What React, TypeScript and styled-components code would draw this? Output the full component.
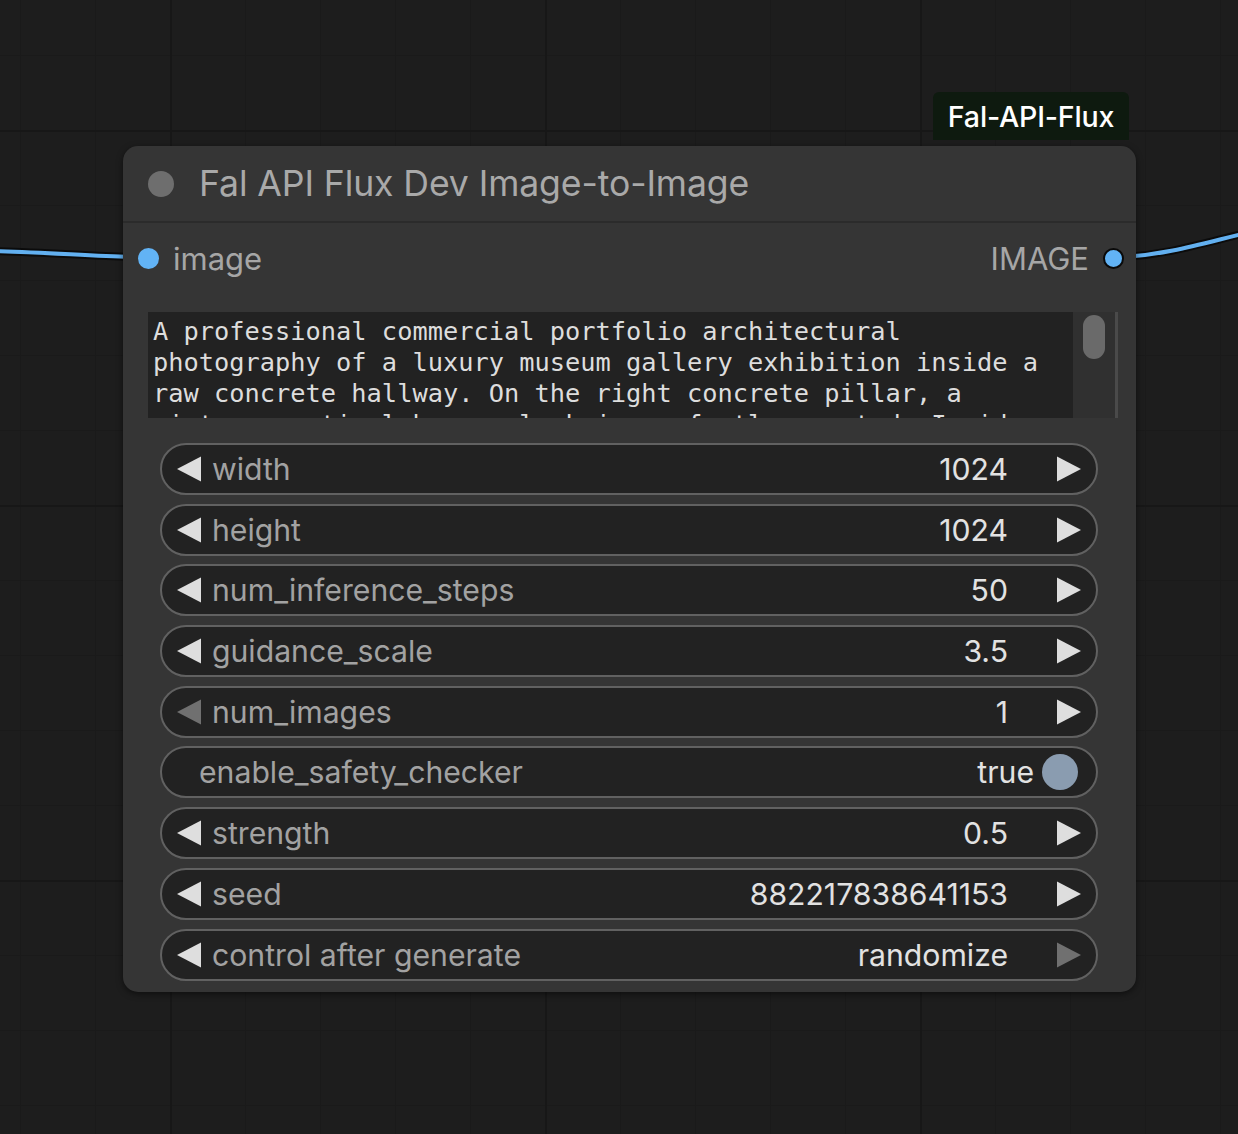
import styled, { createGlobalStyle } from 'styled-components';

// --- Global ---
const GlobalStyle = createGlobalStyle`
  html, body {
    margin: 0;
    padding: 0;
    background: #1d1d1d;
  }
  * {
    box-sizing: border-box;
  }
`;

// --- Canvas ---
const Canvas = styled.div`
  position: relative;
  width: 1238px;
  height: 1134px;
  overflow: hidden;
  font-family: Inter, 'Liberation Sans', sans-serif;
  background-color: #1d1d1d;
  background-image:
    linear-gradient(to right, #171717 2px, transparent 2px),
    linear-gradient(to bottom, #171717 2px, transparent 2px),
    linear-gradient(to right, #1a1a1a 1px, transparent 1px),
    linear-gradient(to bottom, #1a1a1a 1px, transparent 1px);
  background-size: 375px 375px, 375px 375px, 75px 75px, 75px 75px;
  background-position: 170px 130px, 170px 130px, 20px 55px, 20px 55px;
`;

const Wires = styled.svg`
  position: absolute;
  inset: 0;
  pointer-events: none;
`;

const GroupBadge = styled.div`
  position: absolute;
  left: 933px;
  top: 92px;
  width: 196px;
  height: 48px;
  display: flex;
  align-items: center;
  justify-content: center;
  background: #0e1a0f;
  border-radius: 6px 6px 0 0;
  color: #ffffff;
  font-size: 28.6px;
  font-weight: 500;
  letter-spacing: -0.2px;
`;

// --- Node ---
const Node = styled.div`
  position: absolute;
  left: 123px;
  top: 146px;
  width: 1013px;
  background: #353535;
  border-radius: 15px;
  box-shadow: 0 2px 6px rgba(0, 0, 0, 0.5);
  padding-bottom: 11px;
`;

const TitleBar = styled.div`
  height: 77px;
  display: flex;
  align-items: center;
  gap: 25px;
  padding-left: 25px;
  border-bottom: 2px solid #2b2b2b;
`;

const TitleDot = styled.span`
  width: 26px;
  height: 26px;
  border-radius: 50%;
  background: #6e6e6e;
`;

const Title = styled.span`
  color: #a9a9a9;
  font-size: 35.6px;
  letter-spacing: -0.1px;
`;

const SlotRow = styled.div`
  height: 70px;
  display: flex;
  align-items: center;
  justify-content: space-between;
  padding: 0 12px 0 15px;
`;

const Slot = styled.div`
  display: flex;
  align-items: center;
  gap: 14px;
  color: #a6a6a6;
  font-size: 31px;
`;

const SlotDot = styled.span<{ $outlined?: boolean }>`
  width: 21px;
  height: 21px;
  border-radius: 50%;
  background: #62b3f5;
  border: ${({ $outlined }) => ($outlined ? '2.5px solid #0a0a0a' : 'none')};
`;

// --- Prompt text box ---
const PromptBox = styled.div`
  display: flex;
  margin: 19px 18px 0 25px;
  height: 106px;
`;

const PromptText = styled.div`
  flex: 1;
  background: #222222;
  color: #dddddd;
  font-family: 'DejaVu Sans Mono', 'Liberation Mono', monospace;
  font-size: 25.35px;
  line-height: 31px;
  padding: 4px 12px 0 5px;
  overflow: hidden;
  white-space: pre-wrap;
  word-break: normal;
`;

const ScrollTrack = styled.div`
  width: 45px;
  padding: 3px 0 0 10px;
  border-right: 3px solid #4a4a4a;
  background: #303030;
`;

const ScrollThumb = styled.div`
  width: 22px;
  height: 44px;
  border-radius: 11px;
  background: #6a6a6a;
`;

// --- Widgets ---
const WidgetList = styled.div`
  display: flex;
  flex-direction: column;
  gap: 8.7px;
  margin: 25px 38px 0 37px;
`;

const Widget = styled.div`
  height: 52px;
  display: flex;
  align-items: center;
  background: #222222;
  border: 2px solid #616161;
  border-radius: 26px;
  padding: 0 14px 0 14px;
  font-size: 30.2px;
`;

const Arrow = styled.svg<{ $dim?: boolean }>`
  flex: none;
  width: 26px;
  height: 26px;
  fill: ${({ $dim }) => ($dim ? '#707070' : '#dedede')};
`;

const Label = styled.span<{ $indent?: boolean }>`
  flex: 1;
  color: #a2a2a2;
  margin-left: ${({ $indent }) => ($indent ? '23px' : '10px')};
  white-space: nowrap;
`;

const Value = styled.span`
  color: #e2e2e2;
  margin-right: 48px;
`;

const ToggleValue = styled.span`
  color: #e2e2e2;
  margin-right: 8px;
`;

const ToggleKnob = styled.span`
  width: 36px;
  height: 36px;
  margin-right: 4px;
  border-radius: 50%;
  background: #8a9cb0;
`;

// --- Data ---
type WidgetDef = {
  label: string;
  value: string;
  kind?: 'number' | 'toggle';
  dimLeft?: boolean;
  dimRight?: boolean;
};

const widgets: WidgetDef[] = [
  { label: 'width', value: '1024' },
  { label: 'height', value: '1024' },
  { label: 'num_inference_steps', value: '50' },
  { label: 'guidance_scale', value: '3.5' },
  { label: 'num_images', value: '1', dimLeft: true },
  { label: 'enable_safety_checker', value: 'true', kind: 'toggle' },
  { label: 'strength', value: '0.5' },
  { label: 'seed', value: '882217838641153' },
  { label: 'control after generate', value: 'randomize', dimRight: true },
];

const prompt =
  'A professional commercial portfolio architectural photography of a luxury museum gallery exhibition inside a raw concrete hallway. On the right concrete pillar, a vintage nautical brass clock is perfectly mounted. Inside a glass display case';

function LeftArrow({ dim }: { dim?: boolean }) {
  return (
    <Arrow $dim={dim} viewBox="0 0 26 26">
      <polygon points="1,13 25,0.5 25,25.5" />
    </Arrow>
  );
}

function RightArrow({ dim }: { dim?: boolean }) {
  return (
    <Arrow $dim={dim} viewBox="0 0 26 26">
      <polygon points="25,13 1,0.5 1,25.5" />
    </Arrow>
  );
}

function WidgetRow({ w }: { w: WidgetDef }) {
  if (w.kind === 'toggle') {
    return (
      <Widget>
        <Label $indent>{w.label}</Label>
        <ToggleValue>{w.value}</ToggleValue>
        <ToggleKnob />
      </Widget>
    );
  }
  return (
    <Widget>
      <LeftArrow dim={w.dimLeft} />
      <Label>{w.label}</Label>
      <Value>{w.value}</Value>
      <RightArrow dim={w.dimRight} />
    </Widget>
  );
}

export default function App() {
  return (
    <Canvas>
      <GlobalStyle />
      <Wires width="1238" height="1134">
        <path d="M -10 251 C 40 252, 90 256, 130 257" stroke="#000" strokeOpacity="0.6" strokeWidth="8" fill="none" />
        <path d="M -10 251 C 40 252, 90 256, 130 257" stroke="#62b0f0" strokeWidth="4" fill="none" />
        <path d="M 1124 257 C 1170 254, 1200 244, 1250 232" stroke="#000" strokeOpacity="0.6" strokeWidth="8" fill="none" />
        <path d="M 1124 257 C 1170 254, 1200 244, 1250 232" stroke="#62b0f0" strokeWidth="4" fill="none" />
      </Wires>

      <GroupBadge>Fal-API-Flux</GroupBadge>

      <Node>
        <TitleBar>
          <TitleDot />
          <Title>Fal API Flux Dev Image-to-Image</Title>
        </TitleBar>

        <SlotRow>
          <Slot>
            <SlotDot />
            image
          </Slot>
          <Slot>
            IMAGE
            <SlotDot $outlined />
          </Slot>
        </SlotRow>

        <PromptBox>
          <PromptText>{prompt}</PromptText>
          <ScrollTrack>
            <ScrollThumb />
          </ScrollTrack>
        </PromptBox>

        <WidgetList>
          {widgets.map(w => (
            <WidgetRow key={w.label} w={w} />
          ))}
        </WidgetList>
      </Node>
    </Canvas>
  );
}
